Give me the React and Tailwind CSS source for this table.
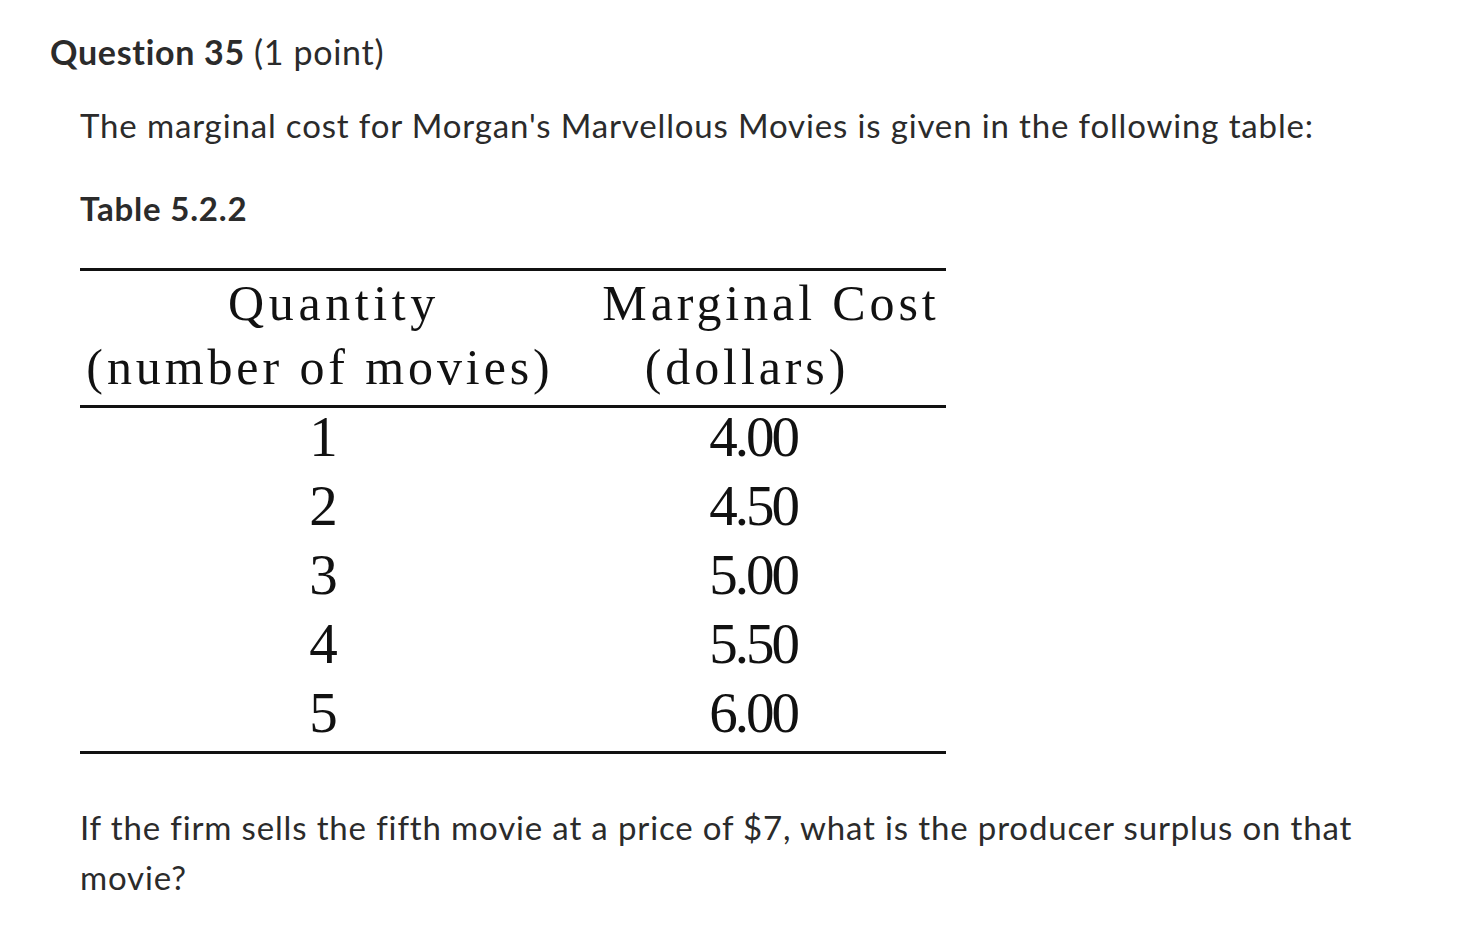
export default function App() {
  const rows = [
    ["1", "4.00"],
    ["2", "4.50"],
    ["3", "5.00"],
    ["4", "5.50"],
    ["5", "6.00"],
  ];
  return (
    <div className="min-h-[930px] w-[1478px] bg-white text-[#2b2b2b] font-['Lato','Liberation_Sans',sans-serif]">
      <div className="pl-[50px] pt-[32px]">
        <h2 className="text-[34px] leading-[40px] font-bold tracking-[0.7px]">
          Question 35 <span className="font-normal">(1 point)</span>
        </h2>
        <div className="pl-[30px] w-[1360px]">
          <p className="mt-[28px] text-[33px] leading-[50px] tracking-[0.85px]">
            The marginal cost for Morgan's Marvellous Movies is given in the following table:
          </p>
          <p className="mt-[33px] text-[33px] leading-[50px] font-bold tracking-[0.8px]">Table 5.2.2</p>
          <div className="mt-[35px] w-[866px] font-['Liberation_Serif',serif] text-[#111]">
            <div className="border-t-[3px] border-b-[3px] border-[#111] grid grid-cols-[480px_386px] pb-[6px] text-[50px] leading-[64px] tracking-[3.9px]">
              <div className="text-center">
                <div className="pl-[28px] tracking-[4.6px]">Quantity</div>
                <div>(number of movies)</div>
              </div>
              <div className="text-center">
                <div className="pl-[36px]">Marginal Cost</div>
                <div className="-ml-[12px]">(dollars)</div>
              </div>
            </div>
            <div className="border-b-[3px] border-[#111] pb-[4px]">
              <div className="-mt-[6px]">
                {rows.map(([q, c]) => (
                  <div key={q} className="grid grid-cols-[480px_386px] text-[57px] leading-[69px] tracking-[-3px] text-center">
                    <div className="pl-[4px]">{q}</div>
                    <div>{c}</div>
                  </div>
                ))}
              </div>
            </div>
          </div>
          <p className="mt-[48px] text-[33px] leading-[50px] tracking-[0.85px]">
            If the firm sells the fifth movie at a price of $7, what is the producer surplus on that movie?
          </p>
        </div>
      </div>
    </div>
  );
}
